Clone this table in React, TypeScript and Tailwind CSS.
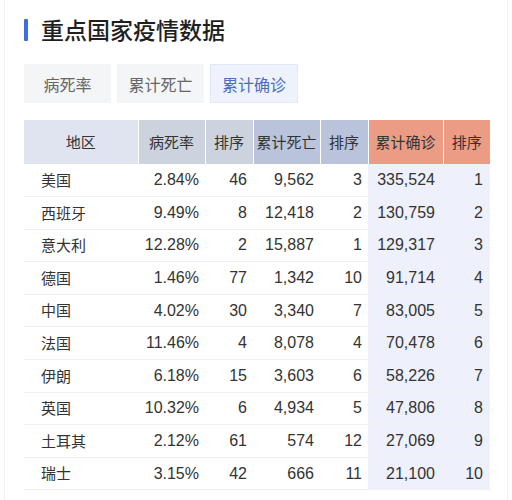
const rows: [string, string, number, string, number, string, number][] = [
  ['美国', '2.84%', 46, '9,562', 3, '335,524', 1],
  ['西班牙', '9.49%', 8, '12,418', 2, '130,759', 2],
  ['意大利', '12.28%', 2, '15,887', 1, '129,317', 3],
  ['德国', '1.46%', 77, '1,342', 10, '91,714', 4],
  ['中国', '4.02%', 30, '3,340', 7, '83,005', 5],
  ['法国', '11.46%', 4, '8,078', 4, '70,478', 6],
  ['伊朗', '6.18%', 15, '3,603', 6, '58,226', 7],
  ['英国', '10.32%', 6, '4,934', 5, '47,806', 8],
  ['土耳其', '2.12%', 61, '574', 12, '27,069', 9],
  ['瑞士', '3.15%', 42, '666', 11, '21,100', 10],
];

const tabs = ['病死率', '累计死亡', '累计确诊'];

export default function App() {
  return (
    <div
      className="w-[512px] h-[500px] bg-white overflow-hidden"
      style={{ fontFamily: '"Liberation Sans", "Noto Sans CJK SC", sans-serif' }}
    >
      <div className="mx-[4px] h-full border-x border-[#f2f2f4] pl-[19px] pr-[18px]">
        {/* Title */}
        <div className="flex items-center h-[58px] pt-[1px]">
          <div className="w-[4px] h-[22px] bg-[#3d6fd9] rounded-[1px]" />
          <h1 className="ml-[13px] text-[23px] font-medium text-[#1f1f1f] leading-none font-['Noto_Sans_CJK_SC']">
            重点国家疫情数据
          </h1>
        </div>

        {/* Tabs */}
        <div className="flex gap-[6px] mt-[6px] font-['Noto_Sans_CJK_SC']">
          {tabs.map((t, i) => (
            <div
              key={t}
              className={`h-[39px] flex items-center justify-center text-[16px] ${
                i === 2
                  ? 'w-[88px] bg-[#eef2fc] text-[#4a6cc2] border border-[#e3e9f8]'
                  : 'w-[87px] bg-[#f4f5f7] text-[#666666]'
              }`}
            >
              {t}
            </div>
          ))}
        </div>

        {/* Table */}
        <table className="mt-[17px] table-fixed border-collapse w-[466px] text-[16px] text-[#333333]">
          <colgroup>
            <col className="w-[114px]" />
            <col className="w-[67px]" />
            <col className="w-[48px]" />
            <col className="w-[67px]" />
            <col className="w-[48px]" />
            <col className="w-[75px]" />
            <col className="w-[47px]" />
          </colgroup>
          <thead className="font-['Noto_Sans_CJK_SC']">
            <tr className="h-[44px] text-[15px] text-[#333333]">
              <th className="font-normal bg-[#dfe4f0] border-r border-white">地区</th>
              <th className="font-normal bg-[#cdd2df] border-r border-white">病死率</th>
              <th className="font-normal bg-[#cdd2df] border-r border-white">排序</th>
              <th className="font-normal bg-[#b9c3da] border-r border-white">累计死亡</th>
              <th className="font-normal bg-[#b9c3da] border-r border-white">排序</th>
              <th className="font-normal bg-[#ec9b85] border-r border-white">累计确诊</th>
              <th className="font-normal bg-[#ec9b85]">排序</th>
            </tr>
          </thead>
          <tbody>
            {rows.map((r) => (
              <tr key={r[0]} className="h-[32.6px] border-b border-[#f1f1f3]">
                <td className="pl-[17px] text-[15px] font-['Noto_Sans_CJK_SC']">{r[0]}</td>
                <td className="text-right pr-[6px]">{r[1]}</td>
                <td className="text-right pr-[6px]">{r[2]}</td>
                <td className="text-right pr-[6px]">{r[3]}</td>
                <td className="text-right pr-[6px]">{r[4]}</td>
                <td className="text-right pr-[8px] bg-[#eef0fc]">{r[5]}</td>
                <td className="text-right pr-[7px] bg-[#eef0fc]">{r[6]}</td>
              </tr>
            ))}
          </tbody>
        </table>
      </div>
    </div>
  );
}
